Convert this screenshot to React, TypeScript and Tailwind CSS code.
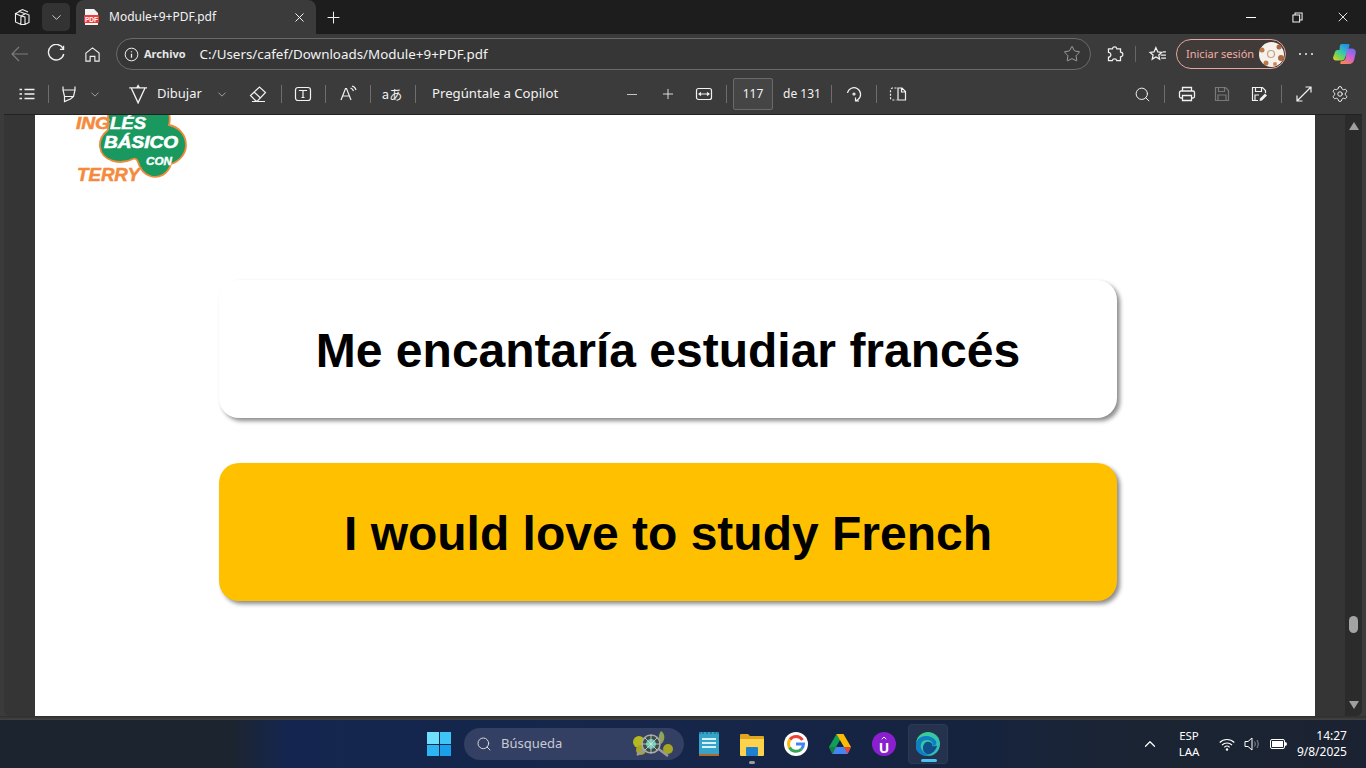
import { ChevronDown, ChevronUp, Plus, Search, Settings, Star, X } from "lucide-react";
import type { ReactNode } from "react";

const Sep = () => (
  <div className="flex h-full w-[6px] shrink-0 items-center justify-center">
    <div className="h-[18px] w-px bg-[#6e6e6e]" />
  </div>
);

const Cell = ({ children, className = "" }: { children: ReactNode; className?: string }) => (
  <div className={`flex h-full w-[36px] shrink-0 items-center justify-center ${className}`}>{children}</div>
);

const Ico = ({ children, size = 18, className = "" }: { children: ReactNode; size?: number; className?: string }) => (
  <svg width={size} height={size} viewBox="0 0 18 18" fill="none" stroke="currentColor" strokeWidth="1.2" className={className}>
    {children}
  </svg>
);

const TabStrip = () => (
  <div className="flex h-[34px] items-center bg-[#1d1d1d] text-[#f2f2f2]">
    <div className="flex w-[42px] shrink-0 justify-center pl-[2px]">
      <Ico size={18}>
        <path d="M5.500 3.500 9.500 1.500l5.500 2.500M2.500 6v-.5L6.500 3.500l5 2M2.500 5.500 8 8l-.2 8.500-5.300-2.500zM8 8l4.500-2.500 3.500 1.500v7.500L12 16.500l-4.200 0M12 16.500V9L8 8" strokeWidth="1.100" />
      </Ico>
    </div>
    <div className="flex h-[28px] w-[28px] shrink-0 items-center justify-center rounded-[5px] bg-[#333333]">
      <ChevronDown size={15} strokeWidth={1.3} />
    </div>
    <div className="ml-[6px] flex h-[34px] w-[240px] shrink-0 items-center rounded-t-[8px] bg-[#3b3b3b] pl-[8px]">
      <svg width="15" height="16" viewBox="0 0 15 16">
        <path d="M1 0h9l4 4v12H1z" fill="#f4f4f4" />
        <rect x="0" y="6" width="15" height="8" fill="#ef3b3b" rx="1" />
        <text x="7.5" y="12.5" textAnchor="middle" fontSize="6.5" fontWeight="700" fill="#fff" fontFamily="Liberation Sans">PDF</text>
      </svg>
      <span className="ml-[10px] text-[12px] text-[#f2f2f2]">Module+9+PDF.pdf</span>
      <X size={15} strokeWidth={1.6} className="ml-auto mr-[9px]" />
    </div>
    <Plus size={19} strokeWidth={1.3} className="ml-[8px]" />
    <div className="ml-auto flex items-center">
      <div className="flex w-[46px] justify-center"><div className="h-px w-[10px] bg-white" /></div>
      <div className="flex w-[46px] justify-center">
        <Ico size={11}><path d="M1.500 5h11v11.500h-11z M5 5V1.500h11.500V13H12.500" strokeWidth="1.700" /></Ico>
      </div>
      <div className="flex w-[46px] justify-center"><X size={16} strokeWidth={1.4} /></div>
    </div>
  </div>
);

const AddressRow = () => (
  <div className="flex h-[40px] items-center bg-[#3b3b3b] text-[#f0f0f0]">
    <svg width="20" height="20" viewBox="0 0 20 20" fill="none" stroke="#7c7c7c" strokeWidth="1.2" className="ml-[10px] shrink-0">
      <path d="M18 10H2M9 3l-7 7 7 7" />
    </svg>
    <Ico size={20} className="ml-[16px] shrink-0">
      <path d="M15.500 4.300A7 7 0 1 0 16 9M15.800 1.500v3.300h-3.300" />
    </Ico>
    <Ico size={17} className="ml-[18px] shrink-0">
      <path d="M2 7.500 9 2l7 5.500V16h-4.500v-5h-5v5H2z" />
    </Ico>
    <div className="ml-[15px] flex h-[32px] w-[975px] shrink-0 items-center rounded-full border border-[#6a6a6a] bg-[#363636] pl-[7px]">
      <Ico size={15}>
        <circle cx="9" cy="9" r="7.600" />
        <path d="M9 8v5M9 5v1.400" strokeWidth="1.500" />
      </Ico>
      <span className="ml-[5px] text-[11px] font-bold text-[#e6e6e6]">Archivo</span>
      <span className="ml-[14px] text-[13.4px] text-[#f2f2f2]">C:/Users/cafef/Downloads/Module+9+PDF.pdf</span>
      <Star size={18} strokeWidth={1} className="ml-auto mr-[9px] text-[#bdbdbd]" />
    </div>
    <Ico size={19} className="ml-[14px] shrink-0">
      <path d="M7 3.600a2.200 2.200 0 0 1 4.300 0h3.400v3.200a2.200 2.200 0 0 1 0 4.400v3.600h-3.500a2.200 2.200 0 0 0-4.300 0H3.300v-3.300a2.200 2.200 0 0 0 0-4.500V3.600z" strokeWidth="1.200" />
    </Ico>
    <div className="ml-[11px] h-[16px] w-px bg-[#666666]" />
    <Ico size={19} className="ml-[12px] shrink-0">
      <path d="M7.500 2.500 9.300 6.600l3.700.4-2.800 2.500.8 3.900-3.500-2-3.500 2 .8-3.900L2 7l3.700-.4zM12 9.500h5M12.500 12.500h4.500M14 6.500h3" />
    </Ico>
    <div className="ml-[9px] flex h-[30px] w-[110px] shrink-0 items-center rounded-full border border-[#e6a79f] bg-[#403a39] pl-[9px]">
      <span className="text-[11px] text-[#eeb0a8]">Iniciar sesión</span>
      <svg width="25" height="25" viewBox="0 0 25 25" className="ml-auto mr-[1px]">
        <circle cx="12.500" cy="12.500" r="12.500" fill="#f6f1ea" />
        <circle cx="3" cy="8" r="2.500" fill="#b9794a" />
        <circle cx="20" cy="5" r="2.500" fill="#a9683c" />
        <circle cx="22" cy="16" r="3" fill="#a9683c" />
        <circle cx="7" cy="21" r="2.500" fill="#b9794a" />
        <circle cx="16" cy="22" r="2" fill="#c98a58" />
        <circle cx="12" cy="12" r="3.500" fill="none" stroke="#c2a488" strokeWidth="1.200" />
      </svg>
    </div>
    <div className="ml-[13px] flex w-[14px] shrink-0 justify-between">
      <div className="h-[2px] w-[2px] rounded-full bg-[#f0f0f0]" />
      <div className="h-[2px] w-[2px] rounded-full bg-[#f0f0f0]" />
      <div className="h-[2px] w-[2px] rounded-full bg-[#f0f0f0]" />
    </div>
    <svg width="23" height="20" viewBox="0 0 23 20" className="ml-[20px] shrink-0">
      <defs>
        <linearGradient id="cpA" x1="0.8" y1="0" x2="0.1" y2="1">
          <stop offset="0" stopColor="#1f8fe8" />
          <stop offset="0.45" stopColor="#35c7b0" />
          <stop offset="0.8" stopColor="#8fd63c" />
          <stop offset="1" stopColor="#f2c93a" />
        </linearGradient>
        <linearGradient id="cpB" x1="0.7" y1="0" x2="0.2" y2="1">
          <stop offset="0" stopColor="#6f6cf2" />
          <stop offset="0.5" stopColor="#d65fd0" />
          <stop offset="1" stopColor="#f58a4a" />
        </linearGradient>
      </defs>
      <path d="M7 1c.5-.7 1.200-1 2-1h6c1.500 0 1.800 1 1.300 2.200L12 14c-.8 1.800-2 2.500-3.500 2.500H3c-2 0-3.300-1.500-2.800-3.500L2 8c.5-1.500 1.500-2 3-2h1.500z" fill="url(#cpA)" />
      <path d="M14 4.500h4.500c3 0 4.800 2 4.200 4.500l-1.500 6.500C20.500 18.500 18.500 20 16 20H8.500c-1.200 0-1.500-1-1-2L8 17c2 0 3.800-.5 4.800-3z" fill="url(#cpB)" />
    </svg>
  </div>
);

const PdfToolbar = () => (
  <div className="mx-[4px] flex h-[41px] items-center rounded-t-[8px] border-b border-[#222222] bg-[#3b3b3b] pl-[5px] pr-[4px] text-[#f2f2f2]">
    <Cell>
      <Ico><path d="M6.500 4.500h10M6.500 9h10M6.500 13.500h10M1.500 4.500h2.500M1.500 9h2.500M1.500 13.500h2.500" strokeWidth="1.300" /></Ico>
    </Cell>
    <Sep />
    <Cell>
      <Ico><path d="M3 1.500V5h12V1.500M3 5l1.500 6.500h9L15 5M4.500 11.500v5l6-2.500 3-2.500" strokeWidth="1.200" /></Ico>
    </Cell>
    <ChevronDown size={13} strokeWidth={1.200} className="w-[16px] shrink-0 text-[#cfcfcf]" />
    <Cell className="ml-[16px]">
      <Ico size={20}><path d="M2 3.500h16M4 4l6 13 6-13M8.800 3.500 10 1.500l1.200 2" strokeWidth="1.200" /></Ico>
    </Cell>
    <span className="ml-[2px] w-[45px] shrink-0 text-[13px]">Dibujar</span>
    <ChevronDown size={13} strokeWidth={1.200} className="ml-[12px] w-[16px] shrink-0 text-[#cfcfcf]" />
    <Cell className="ml-[10px]">
      <Ico><path d="M7 16 1.500 10.500 10.500 2l6 5.500L8.500 16zM5 7l6.500 6M3 16.500h13" /></Ico>
    </Cell>
    <div className="ml-[2px] h-full"><Sep /></div>
    <Cell className="ml-px">
      <Ico><rect x="1.500" y="2.500" width="15" height="13" rx="2.500" /><path d="M5.500 6V5.500h7V6M9 5.500v7M7.500 12.500h3" /></Ico>
    </Cell>
    <div className="ml-px h-full"><Sep /></div>
    <Cell className="ml-[2px]">
      <Ico><path d="M2 15 6.500 3.500h1L12 15M3.800 11h6.600M11.500 3c1.500.5 2.500 1.500 3 3M13 1c2 .5 3.500 2 4 4" /></Ico>
    </Cell>
    <div className="ml-px h-full"><Sep /></div>
    <Cell className="ml-px">
      <span className="font-['Noto_Sans_CJK_JP',sans-serif] text-[13px]">aあ</span>
    </Cell>
    <div className="ml-[2px] h-full"><Sep /></div>
    <span className="ml-[14px] w-[127px] shrink-0 whitespace-nowrap text-[13.2px]">Pregúntale a Copilot</span>
    <Cell className="ml-[55px]"><div className="h-px w-[10px] bg-[#c4c4c4]" /></Cell>
    <Cell><Plus size={16} strokeWidth={1.300} /></Cell>
    <Cell>
      <Ico><rect x="1.500" y="3.500" width="15" height="11" rx="2" /><path d="M4 9h10M6 7.500 4 9l2 1.500M12 7.500 14 9l-2 1.500" /></Ico>
    </Cell>
    <div className="ml-px h-full"><Sep /></div>
    <div className="ml-[4px] flex h-[32px] w-[40px] shrink-0 items-center justify-center rounded-[2px] border border-[#6a6a6a] bg-[#454545] text-[12px]">117</div>
    <span className="ml-[10px] w-[36px] shrink-0 whitespace-nowrap text-[12px]">de 131</span>
    <div className="ml-[9px] h-full"><Sep /></div>
    <Cell className="ml-[2px]">
      <Ico size={18}>
        <path d="M2.500 8a6.600 6.600 0 1 1 10.500 6.500L10.500 16M10.500 12.500v3.500h3.500" strokeWidth="1.200" />
        <circle cx="9" cy="9" r="1" />
      </Ico>
    </Cell>
    <div className="ml-px h-full"><Sep /></div>
    <Cell className="ml-px">
      <Ico><path d="M7.500 3H3.500a2 2 0 0 0-2 2v8a2 2 0 0 0 2 2h4" strokeDasharray="2 1.500" /><path d="M9 3h4l3.500 3.500V15H9zM12.500 3v4h4" /></Ico>
    </Cell>
    <div className="ml-auto flex h-full items-center">
      <Cell><Search size={17} strokeWidth={1.400} /></Cell>
      <div className="ml-px h-full"><Sep /></div>
      <Cell className="ml-[2px]">
        <Ico><path d="M4.500 6V2.500h9V6M4.500 13H3a1.500 1.500 0 0 1-1.500-1.500v-4A1.500 1.500 0 0 1 3 6h12a1.500 1.500 0 0 1 1.500 1.500v4A1.500 1.500 0 0 1 15 13h-1.500M4.500 10.500h9v5h-9z" strokeWidth="1.300" /></Ico>
      </Cell>
      <Cell className="-ml-px">
        <Ico className="text-[#787878]"><path d="M2.500 2.500h10l3 3v10h-13zM5.500 2.500v4h6v-4M5 15.500v-5.500h8v5.500" /></Ico>
      </Cell>
      <Cell className="ml-px">
        <Ico><path d="M8 15.500H2.500v-13h10l3 3V8M5.500 2.500v4h6v-4M5 15v-5h4" strokeWidth="1.200" /><path d="m9.500 16 .5-2.500 5-5 2 2-5 5z" fill="currentColor" stroke="none" /></Ico>
      </Cell>
      <div className="ml-px h-full"><Sep /></div>
      <Cell className="ml-[2px]">
        <Ico><path d="M10.500 2H16v5.500M16 2 2 16M2 10.500V16h5.500" strokeWidth="1.200" /></Ico>
      </Cell>
      <Cell><Settings size={18} strokeWidth={1.300} /></Cell>
    </div>
  </div>
);

const Logo = () => (
  <svg width="124" height="80" viewBox="0 0 124 80" className="ml-[39px] shrink-0">
    <path
      d="M34 0h61c1 4 1 8 0 12 10 2 17 10 17 20 0 10-8 17-15 19-3 10-12 15-21 12-6-2-10-7-12-14-1-3-3-4-5-3-12 6-31 3-33-12-1-8 3-13 8-17 0-6 0-12 0-17z"
      fill="#19995f"
      stroke="#f08a3c"
      strokeWidth="1.800"
    />
    <g fontFamily="Liberation Sans" fontWeight="700" fontStyle="italic">
      <text x="2" y="16" fontSize="16" textLength="34" lengthAdjust="spacingAndGlyphs" fill="#f58a3c" stroke="#f58a3c" strokeWidth=".5">ING</text>
      <text x="36" y="16" fontSize="16" textLength="36" lengthAdjust="spacingAndGlyphs" fill="#ffffff" stroke="#ffffff" strokeWidth=".5">LÉS</text>
      <text x="30" y="35" fontSize="16" textLength="74" lengthAdjust="spacingAndGlyphs" fill="#ffffff" stroke="#ffffff" strokeWidth=".6">BÁSICO</text>
      <text x="72" y="52" fontSize="11" textLength="26" lengthAdjust="spacingAndGlyphs" fill="#ffffff" stroke="#ffffff" strokeWidth=".4">CON</text>
      <text x="3" y="68" fontSize="18" textLength="63" lengthAdjust="spacingAndGlyphs" fill="#f58a3c" stroke="#f58a3c" strokeWidth=".5">TERRY</text>
    </g>
  </svg>
);

const Card = ({ text, className }: { text: string; className: string }) => (
  <div
    className={`flex h-[138px] w-[898px] items-center justify-center rounded-[20px] font-['Liberation_Sans',sans-serif] text-[48px] font-bold text-black shadow-[3px_3px_4px_rgba(0,0,0,0.45)] ${className}`}
  >
    <span className="pt-[3px]">{text}</span>
  </div>
);

const Viewer = () => (
  <div className="mx-[4px] flex h-[601px] rounded-b-[6px] bg-[#353535]">
    <div className="ml-[31px] flex h-[601px] w-[1280px] shrink-0 flex-col overflow-hidden bg-white">
      <div className="-mt-[2px] h-[70px] shrink-0"><Logo /></div>
      <div className="mt-[97px] flex flex-col items-center pr-[14px]">
        <Card text="Me encantaría estudiar francés" className="bg-white" />
        <Card text="I would love to study French" className="mt-[45px] bg-[#ffc000]" />
      </div>
    </div>
    <div className="ml-auto flex w-[17px] shrink-0 flex-col items-center rounded-br-[6px] bg-[#2b2b2b] pt-[7px] pb-[7px]">
      <div className="h-0 w-0 border-x-[5px] border-b-[8px] border-x-transparent border-b-[#9f9f9f]" />
      <div className="mt-[486px] h-[17px] w-[9px] rounded-full bg-[#a3a3a3]" />
      <div className="mt-auto h-0 w-0 border-x-[5px] border-t-[8px] border-x-transparent border-t-[#9f9f9f]" />
    </div>
  </div>
);

const Taskbar = () => (
  <div className="flex h-[48px] items-center bg-[linear-gradient(90deg,#1c2430_0%,#1c2430_17%,#14264f_21%,#16264a_50%,#15233f_70%,#1b2433_83%,#1b2332_100%)] text-white">
    <div className="ml-[427px] grid h-[24px] w-[24px] shrink-0 grid-cols-2 gap-[1px]">
      <div className="bg-[#6fe0fb]" />
      <div className="bg-[#3cc5f5]" />
      <div className="bg-[#2bb5f2]" />
      <div className="bg-[#18a0ea]" />
    </div>
    <div className="ml-[13px] flex h-[32px] w-[220px] shrink-0 items-center rounded-full bg-[#333f63] pl-[12px]">
      <Search size={16} strokeWidth={1.500} className="text-[#d8d8d8]" />
      <span className="ml-[9px] text-[13px] text-[#c9cbd4]">Búsqueda</span>
      <svg width="42" height="28" viewBox="0 0 42 28" className="ml-auto mr-[10px]">
        <circle cx="7" cy="12" r="6" fill="#b6b820" />
        <circle cx="9" cy="20" r="5" fill="#a5a724" />
        <circle cx="36" cy="19" r="5" fill="#a5a724" />
        <path d="M29 1c5 3 4 10 0 13-3-4-3-9 0-13z" fill="#8fa35a" />
        <path d="M5 25 20 14l16 12" stroke="#9a9a9a" strokeWidth="2.500" fill="none" />
        <circle cx="19" cy="14" r="9" fill="#3f4a4a" stroke="#a9a9a9" strokeWidth="1.500" />
        <circle cx="19" cy="14" r="5" fill="#5fc0b0" />
        <path d="M19 5v18M10 14h18M13 8l12 12M25 8 13 20" stroke="#d6e6d6" strokeWidth=".8" />
      </svg>
    </div>
    <div className="ml-[15px] flex w-[22px] shrink-0 flex-col">
      <div className="h-[22px] w-[20px] border-t-2 border-dotted border-[#1e7fa8] bg-[#36a3c9] px-[3px] pt-[4px]">
        <div className="h-[2px] bg-[#d5f1fa]" />
        <div className="mt-[2px] h-[2px] bg-[#d5f1fa]" />
        <div className="mt-[2px] h-[2px] bg-[#d5f1fa]" />
      </div>
      <div className="h-[2px] w-[20px] bg-[#b5672a]" />
    </div>
    <div className="relative ml-[19px] shrink-0">
      <svg width="24" height="23" viewBox="0 0 24 23">
        <path d="M0 2a1 1 0 0 1 1-1h7l2 2h13a1 1 0 0 1 1 1v3H0z" fill="#e0a521" />
        <path d="M0 6h24v16a1 1 0 0 1-1 1H1a1 1 0 0 1-1-1z" fill="#fcd34a" />
        <rect x="6" y="14" width="12" height="9" rx="1" fill="#1f7fd1" />
      </svg>
      <div className="absolute -bottom-[8px] left-[9px] h-[3px] w-[6px] rounded-full bg-[#9b9b9b]" />
    </div>
    <svg width="24" height="24" viewBox="0 0 24 24" className="ml-[20px] shrink-0">
      <circle cx="12" cy="12" r="12" fill="#ffffff" />
      <path d="M18.500 8A7.500 7.500 0 0 0 6 7.500" stroke="#ea4335" strokeWidth="3" fill="none" />
      <path d="M6 7.500a7.500 7.500 0 0 0-.5 8" stroke="#fbbc05" strokeWidth="3" fill="none" />
      <path d="M5.500 15.500A7.500 7.500 0 0 0 17.500 17" stroke="#34a853" strokeWidth="3" fill="none" />
      <path d="M17.500 17a7.500 7.500 0 0 0 2-5H12" stroke="#4285f4" strokeWidth="3" fill="none" />
    </svg>
    <svg width="22" height="20" viewBox="0 0 22 20" className="ml-[21px] shrink-0">
      <path d="M7.500 0h7L7 13H0z" fill="#0f9d58" />
      <path d="M7.500 0h7L22 13h-7z" fill="#fbbc04" />
      <path d="M4 13h18l-3.500 7H3.500L0 13z" fill="#4285f4" />
      <path d="M0 13h7l-3.500 7z" fill="#188038" />
      <path d="M15 13h7l-3.500 7z" fill="#ea4335" />
    </svg>
    <div className="ml-[21px] flex h-[24px] w-[24px] shrink-0 flex-col items-center justify-center rounded-full bg-[#8a1fd0] text-[14px] font-bold leading-[12px] text-white">
      <ChevronUp size={8} strokeWidth={3} />
      <span>U</span>
    </div>
    <div className="relative ml-[12px] flex h-[40px] w-[40px] shrink-0 items-center justify-center rounded-[4px] border border-[#2c3a55] bg-[#25324d]">
      <svg width="24" height="24" viewBox="0 0 24 24">
        <defs>
          <linearGradient id="edgeA" x1="0" y1="0" x2="1" y2="1">
            <stop offset="0" stopColor="#3bd38a" />
            <stop offset="1" stopColor="#2fb7c4" />
          </linearGradient>
        </defs>
        <circle cx="12" cy="12" r="12" fill="url(#edgeA)" />
        <path d="M1 9c3-6 14-7 19 0 1 3 0 5-4 5 2-3-1-6-5-6-5 0-7 4-6 8 1 3 4 7 9 7-7 3-15-3-15-10 0-2 1-3 2-4z" fill="#0f7fc4" />
        <path d="M7 16c0-4 3-7 6-6 2 0 4 2 3 4 3 1 4-1 5 0-2 7-8 9-10 8-3-1-4-3-4-6z" fill="#0e4f8c" />
      </svg>
      <div className="absolute bottom-[1px] left-[12px] h-[3px] w-[16px] rounded-full bg-[#4cc2f1]" />
    </div>
    <ChevronUp size={18} strokeWidth={1.600} className="ml-[193px] shrink-0" />
    <div className="ml-[13px] flex w-[34px] shrink-0 flex-col items-center text-[11.500px] leading-[16px]">
      <span>ESP</span>
      <span>LAA</span>
    </div>
    <svg width="16" height="13" viewBox="0 0 16 13" fill="none" stroke="#fff" strokeWidth="1.100" className="ml-[13px] shrink-0">
      <path d="M.7 4.500c4-4 10.600-4 14.600 0M3 7c2.800-2.700 7.200-2.700 10 0M5.300 9.300c1.500-1.400 3.900-1.400 5.400 0" />
      <circle cx="8" cy="11.500" r="1.200" fill="#fff" stroke="none" />
    </svg>
    <svg width="16" height="14" viewBox="0 0 16 14" fill="none" stroke="#fff" className="ml-[9px] shrink-0">
      <path d="M1 4.500h3l4-3.500v12L4 9.500H1z" strokeWidth="1" />
      <path d="M10.500 4.500c1 1.500 1 3.500 0 5M13 3c1.600 2.500 1.600 5.500 0 8" strokeWidth="1" stroke="#8a8f99" />
    </svg>
    <div className="ml-[10px] flex shrink-0 items-center">
      <div className="flex h-[10px] w-[15px] items-center rounded-[2px] border border-white p-px"><div className="h-full w-full bg-white" /></div>
      <div className="h-[4px] w-[2px] rounded-r-full bg-white" />
    </div>
    <div className="ml-auto mr-[19px] flex flex-col items-end text-[12px] leading-[16px]">
      <span>14:27</span>
      <span>9/8/2025</span>
    </div>
  </div>
);

export default function App() {
  return (
    <div className="flex h-[768px] w-[1366px] flex-col overflow-hidden bg-[#3b3b3b] font-['Noto_Sans',sans-serif]">
      <TabStrip />
      <AddressRow />
      <PdfToolbar />
      <Viewer />
      <div className="h-[4px] bg-[linear-gradient(180deg,#2e2e2e,#444444)]" />
      <Taskbar />
    </div>
  );
}
